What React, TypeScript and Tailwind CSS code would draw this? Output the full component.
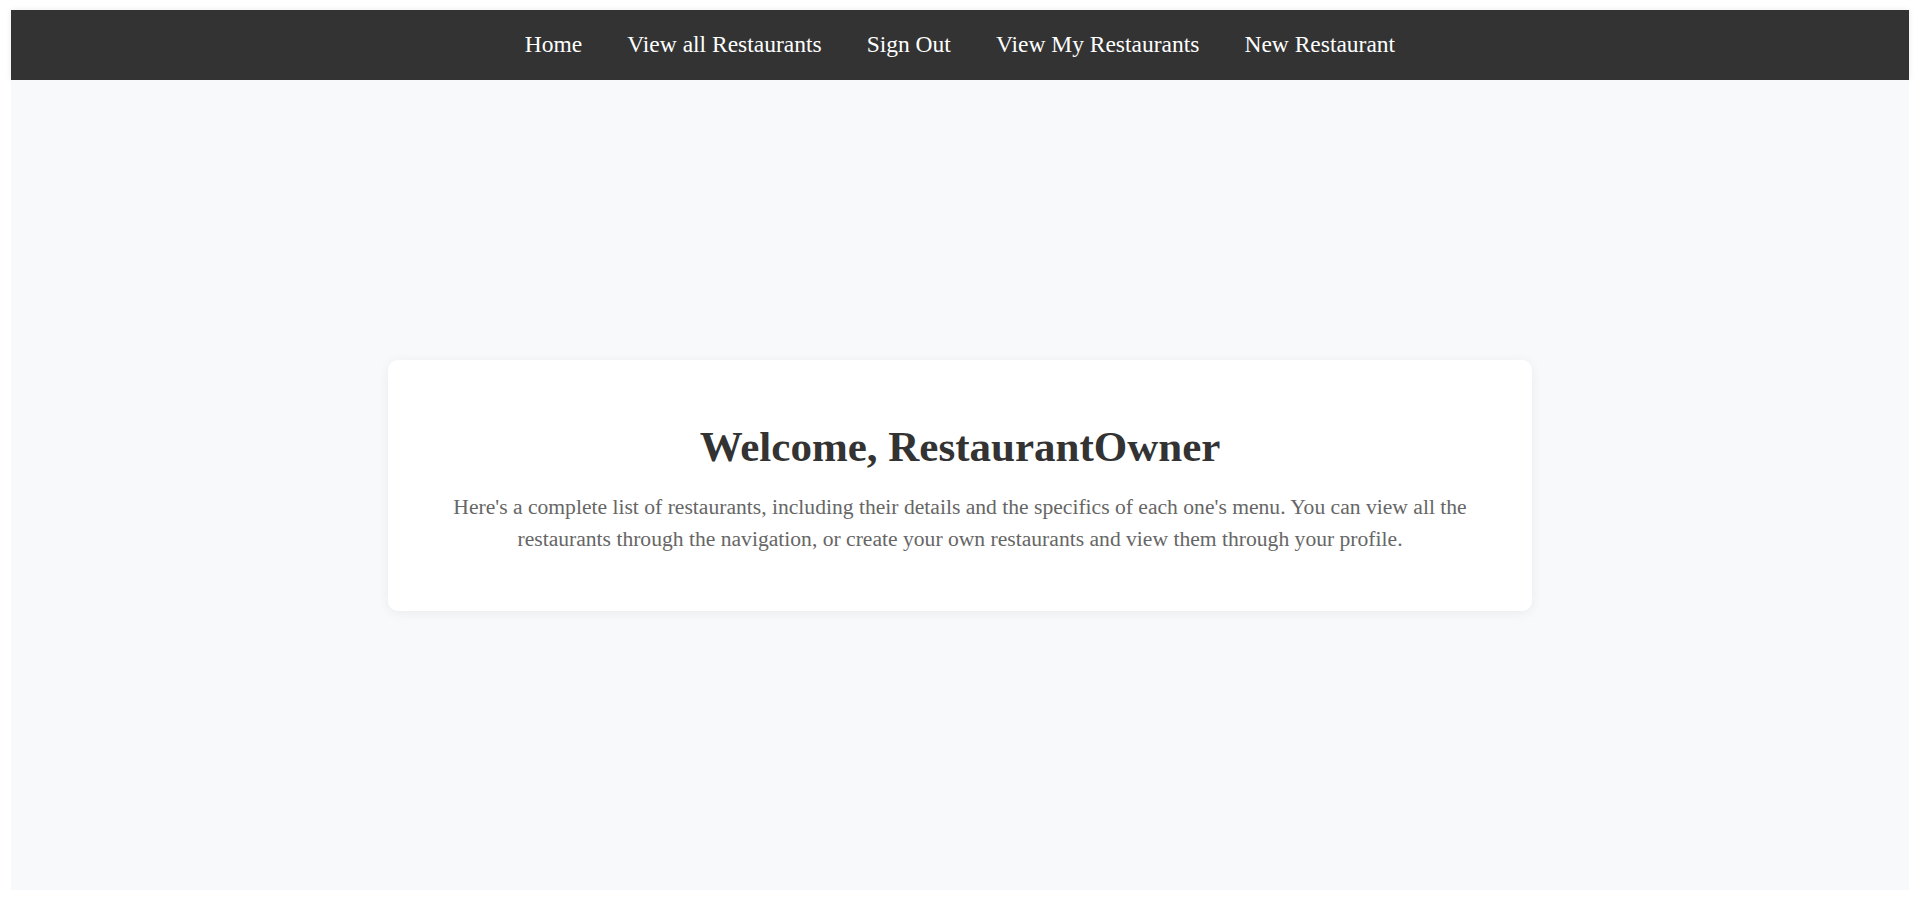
const links = ["Home", "View all Restaurants", "Sign Out", "View My Restaurants", "New Restaurant"];

export default function App() {
  return (
    <div className="min-h-screen bg-white pt-[10px] pl-[11px] pr-[9px] font-['Liberation_Serif','Times_New_Roman',serif]">
      <div className="flex h-[880px] flex-col">
        {/* Top navigation */}
        <nav className="flex h-[70px] shrink-0 items-center justify-center gap-[45px] bg-[#333333] shadow-[0_0_6px_rgba(0,0,0,0.08)]">
          {links.map((link) => (
            <a key={link} href="#" className="text-[23.5px] text-white">
              {link}
            </a>
          ))}
        </nav>

        {/* Welcome card */}
        <main className="flex flex-1 items-center justify-center bg-[#f8f9fa]">
          <div className="w-[1144px] rounded-[10px] bg-white px-[40px] pt-[62px] pb-[56px] text-center shadow-[0_2px_12px_rgba(0,0,0,0.06)]">
            <h1 className="mb-[20px] text-[43px] leading-[49px] font-bold text-[#333333]">
              Welcome, RestaurantOwner
            </h1>
            <p className="text-[21.6px] leading-[32px] text-[#666666]">
              Here's a complete list of restaurants, including their details and the specifics of each one's menu. You can view all the restaurants through the navigation, or create your own restaurants and view them through your profile.
            </p>
          </div>
        </main>
      </div>
    </div>
  );
}
